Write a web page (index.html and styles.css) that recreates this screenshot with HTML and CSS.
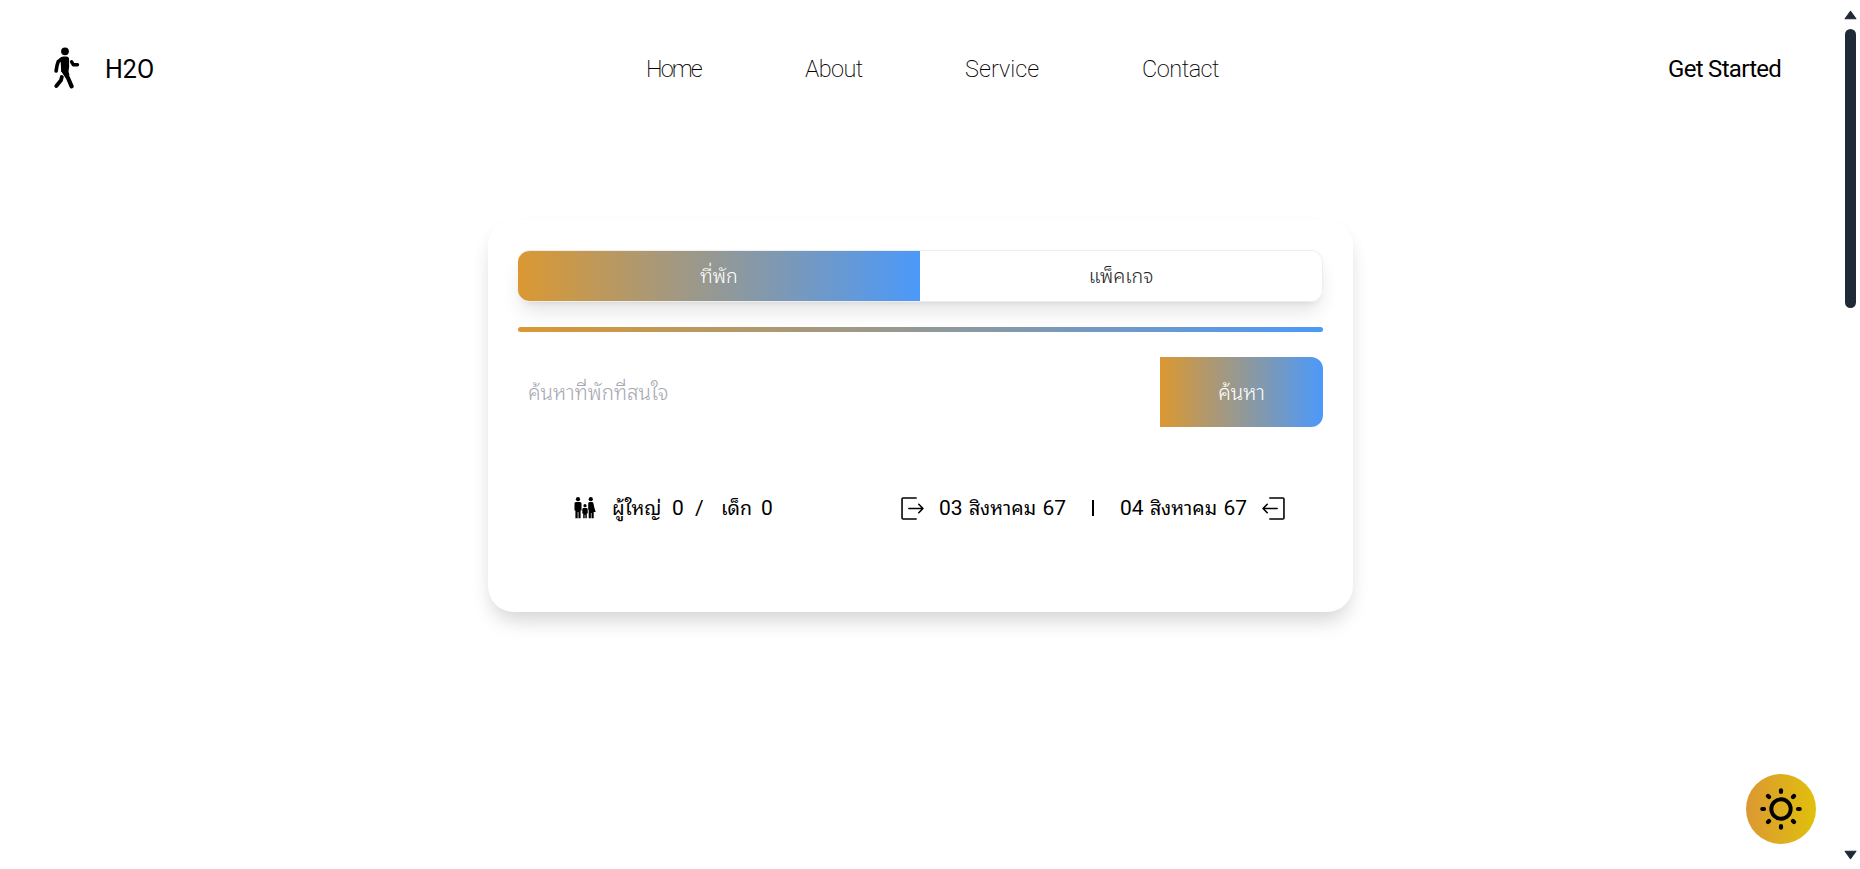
FILE: index.html
```html
<!DOCTYPE html>
<html lang="th">
<head>
<meta charset="utf-8">
<title>H2O</title>
<link rel="stylesheet" href="styles.css">
</head>
<body>
<header class="header">
  <a class="brand">
    <svg class="walker" viewBox="0 0 26 42" fill="none" stroke="#000" stroke-linecap="round" stroke-linejoin="round">
      <circle cx="11" cy="4.300" r="3.900" fill="#000" stroke="none"/>
      <path d="M6.500 11.200Q7.500 9.600 9.500 9.600h2.700q2.900 0 2.900 3v7.500l-.6 4.400 1 3.500-3 1.500L7.200 24.500z" fill="#000" stroke="none"/>
      <path d="M8 11.600L4.200 14.600Q2.800 18 2.100 24" stroke-width="3.600"/>
      <path d="M17.600 14.800l1.700 2.900h4.200" stroke-width="3.400"/>
      <path d="M9.300 23.500l4.500 7 3.800 8.800" stroke-width="4.200"/>
      <path d="M7.800 30L7 33.200 2.300 39" stroke-width="3.800"/>
    </svg>
    <span class="brand-name">H2O</span>
  </a>
  <nav class="nav">
    <a class="nav-home">Home</a><a class="nav-about">About</a><a class="nav-service">Service</a><a class="nav-contact">Contact</a>
  </nav>
  <a class="cta">Get Started</a>
</header>
<main class="main">
  <section class="card">
    <div class="tabs">
      <button class="tab tab-active">ที่พัก</button>
      <button class="tab">แพ็คเกจ</button>
    </div>
    <div class="rule"></div>
    <div class="search">
      <span class="placeholder">ค้นหาที่พักที่สนใจ</span>
      <button class="search-btn">ค้นหา</button>
    </div>
    <div class="details">
      <div class="guests">
        <svg class="family" viewBox="0 0 22 22" fill="#000">
          <circle cx="4" cy="2.200" r="2.100"/><circle cx="16.800" cy="2.200" r="2.100"/><circle cx="11" cy="8.700" r="1.600"/>
          <path d="M2.200 5h3.600c1.200 0 1.700.7 1.700 1.900v6.600h-.9v7.700H4.400V15h-.7v6.200H1.400V13.500H.5V6.900C.5 5.700 1 5 2.200 5z"/>
          <path d="M15.700 5h2.200c.8 0 1.300.4 1.500 1.200l.9 4.300 1.400 4.500h-2v6.200h-2.200V16h-.6v5.200h-2.200v-8l-.5-1V7c0-1.200.4-2 1.500-2z"/>
          <path d="M9.700 11h2.700c.9 0 1.300.6 1.300 1.500v4h-.9v4.700h-1.500v-3.500h-.6v3.500H9.200v-4.700h-.9v-4c0-.9.500-1.500 1.400-1.500z"/>
        </svg>
        <span class="adult">ผู้ใหญ่</span><span class="adult-n">0</span><span class="slash">/</span><span class="child">เด็ก</span><span>0</span>
      </div>
      <div class="dates">
        <svg class="door" viewBox="0 0 22 22"><path d="M14.500 1H2Q1 1 1 2v18q0 1 1 1h12.500M7.500 11h13.500M17 7l4 4-4 4"/></svg>
        <span class="date"><span>03</span><span class="month">สิงหาคม</span><span>67</span></span>
        <span class="bar"></span>
        <span class="date"><span>04</span><span class="month">สิงหาคม</span><span>67</span></span>
        <svg class="door" viewBox="0 0 22 22"><path d="M7.500 1H20q1 0 1 1v18q0 1-1 1H7.500M14.500 11H1M5 7l-4 4 4 4"/></svg>
      </div>
    </div>
  </section>
</main>
<button class="theme">
  <svg viewBox="0 0 44 44" fill="none" stroke="#000" stroke-linecap="round">
    <circle cx="22" cy="22" r="9.700" stroke-width="3.900"/>
    <path stroke-width="4.200" d="M22 3.300v1.700M22 39v1.700M3.300 22H5M39 22h1.700M9 9l1 1M34 34l1 1M9 35l1-1M34 10l1-1"/>
  </svg>
</button>
<div class="scrollbar">
  <svg class="arrow" viewBox="0 0 12 9"><path d="M6 1L11 8H1z"/></svg>
  <div class="thumb"></div>
  <svg class="arrow arrow-down" viewBox="0 0 12 9"><path d="M6 8L11 1H1z"/></svg>
</div>
</body>
</html>
```
FILE: styles.css
```css
* { box-sizing: border-box; }
body { margin: 0; height: 869px; overflow: hidden; background: #fff; color: #000; font-family: Roboto, "Noto Sans Thai Looped", Loma, "Noto Sans Thai", "Noto Sans", sans-serif; font-size: 21px; }
button { border: 0; padding: 0; background: none; font: inherit; color: inherit; }
svg { display: block; flex: none; }
.header { display: flex; align-items: center; height: 136px; padding-left: 54px; }
.brand { display: flex; align-items: center; width: 592px; gap: 25px; }
.walker { width: 26px; height: 42px; }
.brand-name { padding-top: 2px; font-size: 25px; }
.nav { display: flex; width: 1022px; padding-top: 1px; font-size: 23.500px; font-weight: 200; color: #000; }
.nav-home { width: 159px; letter-spacing: -1.9px; }
.nav-about { width: 160px; letter-spacing: -.6px; }
.nav-service { width: 177px; }
.nav-contact { letter-spacing: -.5px; }
.cta { padding-top: 1px; font-size: 24px; letter-spacing: -.7px; white-space: nowrap; }
.main { padding: 84px 0 0 488px; }
.card { width: 865px; height: 392px; padding: 30px; border-radius: 26px; background: #fff; box-shadow: 0 14px 22px -5px rgba(0,0,0,.12), 0 8px 20px -4px rgba(0,0,0,.07); }
.tabs { display: flex; height: 52px; border: 1px solid #eee; border-left: 0; border-radius: 12px; overflow: hidden; box-shadow: 0 12px 20px -3px rgba(0,0,0,.11), 0 4px 6px -4px rgba(0,0,0,.1); }
.tab { flex: 1; padding-bottom: 4px; font-size: 19.500px; font-weight: 300; color: #222; }
.tab-active, .search-btn, .rule { background: linear-gradient(90deg, #db9832, #4b99fa); color: #fff; }
.rule { position: relative; height: 5px; margin-top: 25px; border-radius: 3px; }
.search { display: flex; align-items: center; justify-content: space-between; height: 70px; margin-top: 25px; padding-left: 10px; }
.placeholder { padding-bottom: 4px; color: #a5a8b2; font-size: 20.500px; font-weight: 300; }
.search-btn { width: 163px; height: 70px; padding-bottom: 4px; border-radius: 0 12px 12px 0; font-size: 20.500px; font-weight: 300; }
.details { display: flex; justify-content: space-between; align-items: center; height: 30px; margin-top: 66px; padding: 0 38px 0 56px; }
.guests, .dates, .date { display: flex; align-items: center; white-space: nowrap; }
.family { width: 22px; height: 22px; margin-right: 16px; }
.adult, .child, .month { padding-bottom: 4px; font-size: 19.500px; }
.adult { width: 60px; }
.adult-n { width: 23px; }
.slash { width: 26px; }
.child { width: 40px; }
.door { width: 23px; height: 23px; fill: none; stroke: #000; stroke-width: 1.5; stroke-linecap: round; stroke-linejoin: round; }
.date { width: 127px; margin: 0 15px; justify-content: space-between; }
.bar { width: 2px; height: 16px; margin: 0 11px; background: #000; }
.theme { position: absolute; left: 1746px; top: 774px; display: grid; place-items: center; width: 70px; height: 70px; border-radius: 50%; background: linear-gradient(90deg, #db9832, #e0c00c); }
.theme svg { width: 44px; height: 44px; }
.scrollbar { position: absolute; right: 0; top: 0; display: flex; flex-direction: column; align-items: center; width: 19px; height: 869px; padding: 10px 0 9px; }
.arrow { width: 13px; height: 10px; fill: #1f2937; stroke: #1f2937; stroke-linejoin: round; }
.thumb { width: 11px; height: 279px; margin-top: 9px; border-radius: 6px; background: #1f2937; }
.arrow-down { margin-top: auto; }
```
